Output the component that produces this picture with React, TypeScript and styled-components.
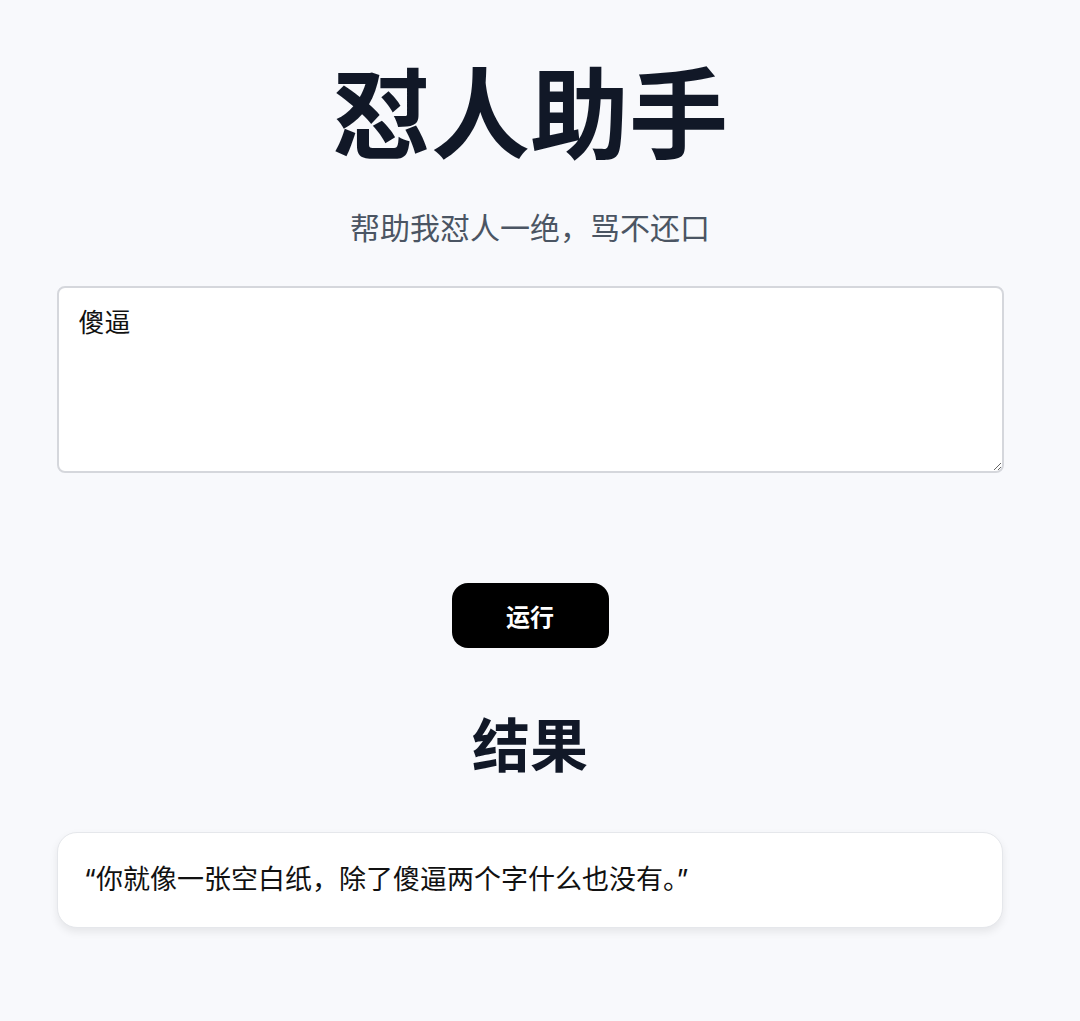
import React, { useState } from 'react'
import styled, { createGlobalStyle } from 'styled-components'

const GlobalStyle = createGlobalStyle`
    body {
        margin: 0;
        background: #f8f9fc;
        font-family: "Inter", "Noto Sans CJK SC", sans-serif;
        color: #111827;
    }
`

const Page = styled.main`
    box-sizing: border-box;
    width: 1060px;
    padding: 54px 0 60px;
    display: flex;
    flex-direction: column;
    align-items: center;
`

const Title = styled.h1`
    margin: 0;
    font-size: 99px;
    line-height: 122px;
    font-weight: 700;
    color: #111827;
`

const Subtitle = styled.p`
    margin: 32px 0 0;
    font-size: 30px;
    line-height: 40px;
    color: #4b5563;
`

const Input = styled.textarea`
    box-sizing: border-box;
    width: 947px;
    height: 187px;
    margin-top: 38px;
    padding: 18px 20px;
    border: 2px solid #d5d7dc;
    border-radius: 8px;
    background: #fff;
    font-family: "Inter", "Noto Sans CJK SC", sans-serif;
    font-size: 26px;
    line-height: 34px;
    color: #111;
    outline: none;
`

const RunButton = styled.button`
    margin-top: 110px;
    width: 157px;
    height: 65px;
    border: none;
    border-radius: 16px;
    background: #000;
    color: #fff;
    font-family: "Inter", "Noto Sans CJK SC", sans-serif;
    font-size: 24px;
    font-weight: 600;
    cursor: pointer;
`

const ResultHeading = styled.h2`
    margin: 58px 0 0;
    font-size: 58px;
    line-height: 80px;
    font-weight: 700;
    color: #111827;
`

const ResultCard = styled.div`
    box-sizing: border-box;
    width: 946px;
    margin-top: 46px;
    padding: 31px 26px;
    background: #fff;
    border: 1px solid #e5e7eb;
    border-radius: 20px;
    box-shadow: 0 4px 8px rgba(0, 0, 0, 0.08);
    font-size: 27px;
    line-height: 32px;
    color: #111;
`

export default function App() {
    const [text, setText] = useState('傻逼')

    return (
        <>
            <GlobalStyle />
            <Page>
                <Title>怼人助手</Title>
                <Subtitle>帮助我怼人一绝，骂不还口</Subtitle>
                <Input value={text} onChange={(e) => setText(e.target.value)} />
                <RunButton>运行</RunButton>
                <ResultHeading>结果</ResultHeading>
                <ResultCard>“你就像一张空白纸，除了傻逼两个字什么也没有。”</ResultCard>
            </Page>
        </>
    )
}
